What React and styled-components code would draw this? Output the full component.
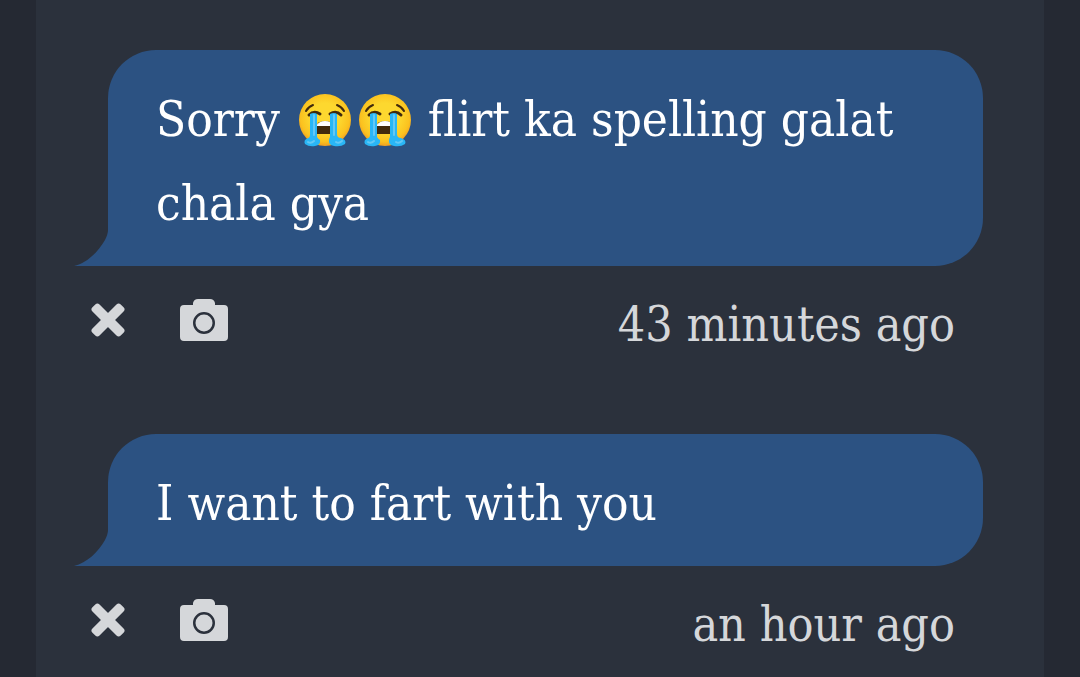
import styled, { createGlobalStyle } from "styled-components";

const GlobalStyle = createGlobalStyle`
  * {
    box-sizing: border-box;
  }
  body {
    margin: 0;
    background-color: #252933;
    font-family: "DejaVu Serif Condensed", "DejaVu Serif", serif;
    font-size: 48px;
    line-height: 84px;
  }
`;

const Panel = styled.main`
  min-height: 100vh;
  margin: 0 36px;
  padding: 50px 61px 0 72px;
  background-color: #2b313c;
`;

const Message = styled.article`
  margin-bottom: 68px;

  &:last-child {
    margin-bottom: 0;
  }
`;

const Bubble = styled.div`
  position: relative;
  padding: 28px 48px 20px;
  border-radius: 48px 48px 48px 0;
  background-color: #2c5282;
  color: #ffffff;
`;

const Text = styled.p`
  margin: 0;
  font-size: 49px;
`;

const Tail = styled.svg`
  position: absolute;
  left: -34px;
  bottom: 0;
  width: 35px;
  height: 36px;
  fill: #2c5282;
`;

const Emoji = styled.svg`
  width: 52px;
  height: 54px;
  margin: 0 3px 0 5px;
  vertical-align: -12px;
`;

const Footer = styled.footer`
  display: flex;
  align-items: center;
  padding: 16px 28px 0 0;
  margin-left: -24px;
  color: #d5d7da;
`;

const Actions = styled.div`
  display: flex;
  gap: 48px;
  padding-bottom: 8px;
`;

const IconButton = styled.button`
  display: flex;
  padding: 0;
  border: 0;
  background: none;
  color: inherit;
  cursor: pointer;

  svg {
    width: 48px;
    height: 48px;
    fill: currentColor;
  }
`;

const Time = styled.time`
  margin-left: auto;
`;

const Crying = () => (
  <Emoji viewBox="0 0 52 54" role="img" aria-label="😭">
    <defs>
      <radialGradient id="face" cx="50%" cy="45%" r="55%">
        <stop offset="0.5" stopColor="#fdd82f" />
        <stop offset="0.85" stopColor="#fbc21f" />
        <stop offset="1" stopColor="#ef9f22" />
      </radialGradient>
    </defs>
    <circle cx="26" cy="26" r="26" fill="url(#face)" />
    <g fill="none" stroke="#422b0d" strokeLinecap="round">
      <path d="M7 17Q9 13 14 11M45 17Q43 13 38 11" strokeWidth="2" />
      <path d="M10 21Q15 16 21 20M31 20Q37 16 42 21" strokeWidth="3" />
    </g>
    <path d="M17 40V33Q18 27 26 27T35 33V40Z" fill="#422b0d" />
    <path d="M17 32Q20 27 26 27T35 32Z" fill="#ffffff" />
    <path
      d="M11 20Q15 18 18 20V43Q19 45 21 46Q22 51 16 52Q10 53 6 50Q4 46 9 44Q11 44 11 40Z"
      fill="#29b6f6"
    />
    <path
      d="M38 20Q35 18 31 20V43Q30 45 30 46Q29 51 35 52Q42 53 46 50Q48 46 42 44Q38 44 38 40Z"
      fill="#29b6f6"
    />
    <path
      d="M15 21V41M35 21V41M9 48Q12 50 15 47M37 48Q40 50 43 47"
      fill="none"
      stroke="#64c8f5"
      strokeWidth="2"
      strokeLinecap="round"
    />
  </Emoji>
);

const CloseIcon = () => (
  <svg viewBox="0 0 48 48" aria-hidden="true">
    <g transform="rotate(45 24 24)">
      <rect x="4" y="19" width="40" height="10" rx="3" />
      <rect x="19" y="4" width="10" height="40" rx="3" />
    </g>
  </svg>
);

const CameraIcon = () => (
  <svg viewBox="0 0 48 48" aria-hidden="true">
    <path
      fillRule="evenodd"
      d="M4 9H13V7Q14 3 18 3H30Q34 3 35 7V9H44Q48 9 48 13V41Q48 45 44 45H4Q0 45 0 41V13Q0 9 4 9ZM24 16A11 11 0 1 0 24 38A11 11 0 1 0 24 16Z"
    />
    <circle cx="24" cy="27" r="8.500" />
  </svg>
);

const ChatMessage = ({ time, children }) => {
  return (
    <Message>
      <Bubble>
        <Text>{children}</Text>
        <Tail viewBox="0 0 35 36" aria-hidden="true">
          <path d="M35 0H34Q34 4 31 10C24 22 13 33 0 36H35Z" />
        </Tail>
      </Bubble>
      <Footer>
        <Actions>
          <IconButton type="button" aria-label="Delete">
            <CloseIcon />
          </IconButton>
          <IconButton type="button" aria-label="Screenshot">
            <CameraIcon />
          </IconButton>
        </Actions>
        <Time>{time}</Time>
      </Footer>
    </Message>
  );
};

const App = () => {
  return (
    <>
      <GlobalStyle />
      <Panel>
        <ChatMessage time="43 minutes ago">
          Sorry <Crying />
          <Crying /> flirt ka spelling galat chala gya
        </ChatMessage>
        <ChatMessage time="an hour ago">I want to fart with you</ChatMessage>
      </Panel>
    </>
  );
};

export default App;
